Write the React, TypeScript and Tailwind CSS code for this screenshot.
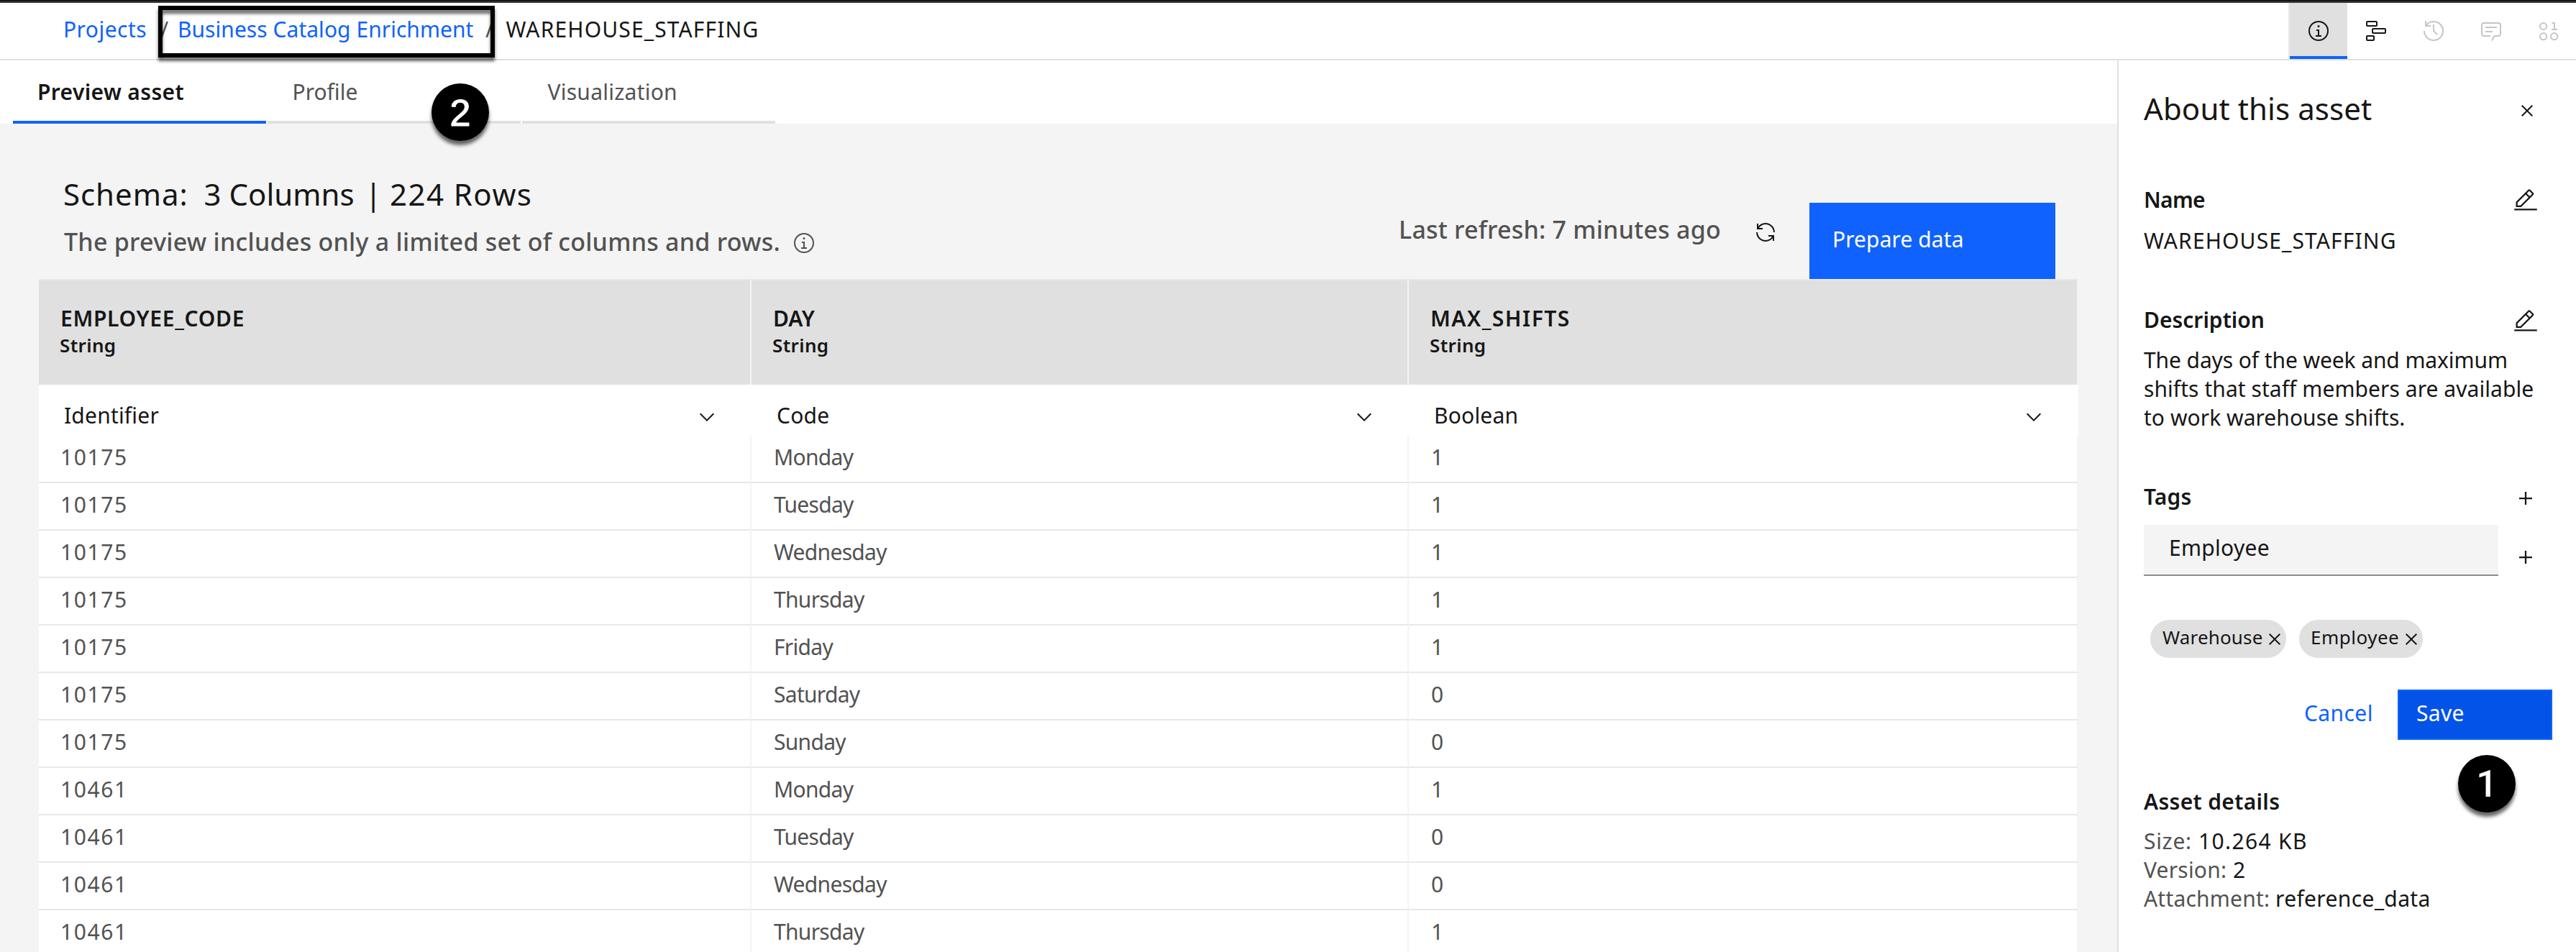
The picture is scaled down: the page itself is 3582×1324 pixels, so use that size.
import type { ReactNode } from "react";

type IconProps = { className?: string; children?: ReactNode };

const Svg = ({ className = "size-8", children }: IconProps) => (
  <svg viewBox="0 0 32 32" fill="currentColor" className={`shrink-0 ${className}`}>
    {children}
  </svg>
);

const InfoIcon = ({ className }: IconProps) => (
  <Svg className={className}>
    <path d="M17 22v-8h-4v2h2v6h-3v2h8v-2zM16 8a1.5 1.5 0 1 0 1.5 1.5A1.5 1.5 0 0 0 16 8z" />
    <path d="M16 30a14 14 0 1 1 14-14 14 14 0 0 1-14 14zm0-26a12 12 0 1 0 12 12A12 12 0 0 0 16 4z" />
  </Svg>
);

const LineageIcon = () => (
  <Svg>
    <g fill="none" stroke="currentColor" strokeWidth="2">
      <rect x="3" y="3" width="14" height="6" rx="1" />
      <rect x="11" y="13" width="18" height="6" rx="1" />
      <rect x="3" y="23" width="10" height="6" rx="1" />
    </g>
  </Svg>
);

const HistoryIcon = () => (
  <Svg>
    <path d="M20.59 22L15 16.41V7h2v8.58l5 5.01L20.59 22z" />
    <path d="M16 2A13.94 13.94 0 0 0 6 6.23V2H4v8h8V8H7.08A12 12 0 1 1 4 16H2A14 14 0 1 0 16 2z" />
  </Svg>
);

const CommentIcon = () => (
  <Svg>
    <path d="M17.74 30L16 29l4-7h6a2 2 0 0 0 2-2V8a2 2 0 0 0-2-2H6a2 2 0 0 0-2 2v12a2 2 0 0 0 2 2h9v2H6a4 4 0 0 1-4-4V8a4 4 0 0 1 4-4h20a4 4 0 0 1 4 4v12a4 4 0 0 1-4 4h-4.84z" />
    <path d="M8 10h16v2H8zM8 16h10v2H8z" />
  </Svg>
);

const BinaryIcon = () => (
  <Svg>
    <g fill="none" stroke="currentColor" strokeWidth="2">
      <circle cx="8.6" cy="9.6" r="4.6" />
      <circle cx="8.6" cy="23.7" r="4.6" />
      <circle cx="23.7" cy="23.7" r="4.6" />
      <path d="M20.5 5H24v9M20 14h8.3" />
    </g>
  </Svg>
);

const CloseIcon = ({ className }: IconProps) => (
  <Svg className={className}>
    <path d="M24 9.4L22.6 8 16 14.6 9.4 8 8 9.4l6.6 6.6L8 22.6 9.4 24l6.6-6.6 6.6 6.6 1.4-1.4-6.6-6.6z" />
  </Svg>
);

const EditIcon = () => (
  <Svg className="size-9">
    <path d="M2 26h28v2H2zM25.4 9c.8-.8.8-2 0-2.8l-3.6-3.6c-.8-.8-2-.8-2.8 0l-15 15V24h6.4zm-5-5L24 7.6l-3 3L17.4 7zM6 22v-3.6l10-10 3.6 3.6-10 10z" />
  </Svg>
);

const AddIcon = () => (
  <Svg className="size-9">
    <path d="M17 15V8h-2v7H8v2h7v7h2v-7h7v-2z" />
  </Svg>
);

const ChevronIcon = () => (
  <Svg>
    <path d="M16 22L6 12l1.4-1.4 8.6 8.6 8.6-8.6L26 12z" />
  </Svg>
);

const RenewIcon = () => (
  <Svg>
    <path d="M12 10H6.78A11 11 0 0 1 27 16h2A13 13 0 0 0 6 7.68V4H4v8h8zM20 22h5.22A11 11 0 0 1 5 16H3a13 13 0 0 0 23 8.32V28h2v-8h-8z" />
  </Svg>
);

const Step = ({ n, className }: { n: number; className: string }) => (
  <div
    className={`absolute z-20 flex size-20 items-center justify-center rounded-full bg-black pt-0.5 text-[52px] leading-none text-white shadow-[0_6px_5px_rgba(0,0,0,0.6)] ${className}`}
  >
    {n}
  </div>
);

const tools = [
  { icon: <LineageIcon />, color: "text-[#161616]" },
  { icon: <HistoryIcon />, color: "text-[#c6c6c6]" },
  { icon: <CommentIcon />, color: "text-[#c6c6c6]" },
  { icon: <BinaryIcon />, color: "text-[#c6c6c6]" },
];

const columns = [
  { name: "EMPLOYEE_CODE", kind: "Identifier", tracking: "tracking-[0.68px]" },
  { name: "DAY", kind: "Code", tracking: "tracking-normal" },
  { name: "MAX_SHIFTS", kind: "Boolean", tracking: "tracking-[1.5px]" },
];

const rows = [
  ["10175", "Monday", "1"],
  ["10175", "Tuesday", "1"],
  ["10175", "Wednesday", "1"],
  ["10175", "Thursday", "1"],
  ["10175", "Friday", "1"],
  ["10175", "Saturday", "0"],
  ["10175", "Sunday", "0"],
  ["10461", "Monday", "1"],
  ["10461", "Tuesday", "0"],
  ["10461", "Wednesday", "0"],
  ["10461", "Thursday", "1"],
];

const Header = () => (
  <header className="relative flex h-[84px] shrink-0 justify-between border-b-2 border-[#e0e0e0] bg-white">
    <div className="absolute inset-x-0 top-0 h-1 border-b-2 border-[#393939] bg-[#161616]" />
    <nav className="flex items-center pb-px pl-[88px] text-[#161616]">
      <span className="w-[135px] tracking-[0.46px] text-[#0f62fe]">Projects</span>
      <span className="w-6 text-[#525252]">/</span>
      <span className="w-[428px] tracking-[0.04px] text-[#0f62fe]">Business Catalog Enrichment</span>
      <span className="w-[28.5px] text-[#525252]">/</span>
      <span className="tracking-[1.14px]">WAREHOUSE_STAFFING</span>
    </nav>
    <div className="-mr-0.5 flex pt-1">
      <div className="flex w-[82px] items-center justify-center border-l-2 border-[#e8e8e8] bg-[#e0e0e0] text-[#161616] shadow-[inset_0_-4px_0_#0f62fe]">
        <InfoIcon />
      </div>
      {tools.map((t, i) => (
        <div key={i} className={`flex w-20 items-center justify-center ${t.color}`}>
          {t.icon}
        </div>
      ))}
    </div>
  </header>
);

const Tabs = () => (
  <div className="flex h-[88px] shrink-0 gap-0.5 bg-white pl-[18px] leading-[88px]">
    <div className="w-[352px] border-b-4 border-[#0f62fe] pl-[34px] font-semibold tracking-[0.37px] text-[#161616]">
      Preview asset
    </div>
    <div className="w-[352px] border-b-4 border-[#e0e0e0] pl-[34.5px] text-[#525252]">Profile</div>
    <div className="w-[352px] border-b-4 border-[#e0e0e0] pl-[35.5px] tracking-[0.25px] text-[#525252]">
      Visualization
    </div>
  </div>
);

const SchemaBar = () => (
  <div className="flex h-[216px] shrink-0 justify-between pr-[86px] pl-[88px]">
    <div className="pt-[70px]">
      <div className="flex text-[42px] leading-[56px] text-[#161616]">
        <span className="w-[195.5px] tracking-[0.95px]">Schema:</span>
        <span className="w-[224px]">3 Columns</span>
        <span className="w-[34.5px]">|</span>
        <span className="tracking-[1.45px]">224 Rows</span>
      </div>
      <div className="mt-[18px] flex items-center pl-px text-[34px] leading-10 font-medium tracking-[0.25px] text-[#525252]">
        The preview includes only a limited set of columns and rows.
        <InfoIcon className="mt-1 ml-[17px] size-8" />
      </div>
    </div>
    <div className="flex pt-[110px]">
      <span className="w-[494px] pt-[17px] text-[34px] leading-10 font-medium tracking-[0.22px] text-[#525252]">
        Last refresh: 7 minutes ago
      </span>
      <span className="w-[77px] pt-[25px] text-[#161616]">
        <RenewIcon />
      </span>
      <button className="flex h-[106px] w-[342px] bg-[#0f62fe] pt-[31px] pl-8 text-left leading-10 tracking-[0.08px] text-white">
        Prepare data
      </button>
    </div>
  </div>
);

const grid = "grid grid-cols-[991px_914px_931px]";

const Table = () => (
  <div className="ml-[54px] w-[2836px] border-t-2 border-[#e8e8e8]">
    <div className={`h-[145px] ${grid}`}>
      {columns.map((c) => (
        <div
          key={c.name}
          className="border-r-2 border-[#f4f4f4] bg-[#e0e0e0] pt-[33px] pl-[30px] font-semibold text-[#161616]"
        >
          <div className={`leading-10 ${c.tracking}`}>{c.name}</div>
          <div className="-mt-px -ml-px text-[26px] leading-9 tracking-[0.35px]">String</div>
        </div>
      ))}
    </div>
    <div className={`h-[71px] bg-white ${grid}`}>
      {columns.map((c) => (
        <div key={c.name} className="flex pt-[23px] pr-[46px] pl-[35px] text-[#161616]">
          <span className="grow leading-10 tracking-[0.2px]">{c.kind}</span>
          <span className="pt-1.5">
            <ChevronIcon />
          </span>
        </div>
      ))}
    </div>
    {rows.map((r, i) => (
      <div key={i} className={`h-[66px] ${grid}`}>
        {r.map((v, j) => (
          <div
            key={j}
            className={`border-r-2 border-b-2 border-r-[#f4f4f4] border-b-[#e8e8e8] bg-white pt-2.5 leading-10 text-[#525252] ${
              j === 0 ? "pl-[30px] tracking-[1.6px]" : "pl-[31px] tracking-[-0.7px]"
            }`}
          >
            {v}
          </div>
        ))}
      </div>
    ))}
  </div>
);

const Pill = ({ label, className }: { label: string; className: string }) => (
  <span className={`flex h-[53px] items-center rounded-full bg-[#e0e0e0] text-[26px] text-[#161616] ${className}`}>
    <span className="-mt-[5px] grow">{label}</span>
    <CloseIcon className="mt-px size-8" />
  </span>
);

const AboutPanel = () => (
  <aside className="flex w-[638px] shrink-0 flex-col border-l-2 border-[#e0e0e0] bg-white pl-[35px] leading-10 text-[#161616]">
    <div className="flex h-[138px] items-start justify-between pt-[39px] pr-[52px]">
      <h1 className="text-[42px] leading-[56px] tracking-[0.1px]">About this asset</h1>
      <CloseIcon className="mt-[15px] size-8" />
    </div>

    <section className="h-[167px] pt-9">
      <div className="flex items-start justify-between pr-[52px]">
        <h2 className="font-semibold tracking-[-0.7px]">Name</h2>
        <span className="mt-[3px]">
          <EditIcon />
        </span>
      </div>
      <p className="mt-[17px] tracking-[1.12px]">WAREHOUSE_STAFFING</p>
    </section>

    <section className="h-[246px] pt-9">
      <div className="flex items-start justify-between pr-[52px]">
        <h2 className="font-semibold">Description</h2>
        <span className="mt-1">
          <EditIcon />
        </span>
      </div>
      <p className="mt-4 w-[560px]">
        <span className="block tracking-[-0.1px]">The days of the week and maximum</span>
        <span className="block tracking-[0.06px]">shifts that staff members are available</span>
        <span className="block tracking-[0.04px]">to work warehouse shifts.</span>
      </p>
    </section>

    <section className="pt-[35px]">
      <div className="flex items-start justify-between pr-[52px]">
        <h2 className="pt-px font-semibold tracking-[0.2px]">Tags</h2>
        <span className="mt-[5px]">
          <AddIcon />
        </span>
      </div>
      <div className="mt-[19px] flex justify-between pr-[52px]">
        <div className="h-[71px] w-[493px] border-b-2 border-[#8d8d8d] bg-[#f4f4f4] pt-3 pl-[35px] tracking-[0.3px]">
          Employee
        </div>
        <span className="mt-[27px]">
          <AddIcon />
        </span>
      </div>
      <div className="mt-[61px] ml-[9px] flex gap-[18px]">
        <Pill label="Warehouse" className="w-[189px] pl-[17px] tracking-[0.15px]" />
        <Pill label="Employee" className="w-[172px] pl-4 tracking-[0.5px]" />
      </div>
      <div className="mt-[44px] flex justify-end pr-[33px]">
        <button className="h-[70px] w-[130px] pb-1 text-left tracking-[0.4px] text-[#0f62fe]">Cancel</button>
        <button className="h-[70px] w-[215px] border-2 border-[#0f62fe] bg-[#0353e9] pb-1 pl-6 text-left tracking-[0.3px] text-white">
          Save
        </button>
      </div>
    </section>

    <section className="pt-[66px]">
      <h2 className="font-semibold tracking-[0.32px]">Asset details</h2>
      <dl className="mt-[15px]">
        <div className="flex">
          <dt className="w-[76px] tracking-[0.7px] text-[#525252]">Size:</dt>
          <dd className="tracking-[1.35px]">10.264 KB</dd>
        </div>
        <div className="flex">
          <dt className="w-[124px] tracking-[0.2px] text-[#525252]">Version:</dt>
          <dd>2</dd>
        </div>
        <div className="flex">
          <dt className="w-[183px] tracking-[0.2px] text-[#525252]">Attachment:</dt>
          <dd className="tracking-[0.35px]">reference_data</dd>
        </div>
      </dl>
    </section>
  </aside>
);

export default function App() {
  return (
    <div className="relative flex h-[1324px] w-[3582px] flex-col overflow-hidden bg-white font-['Noto_Sans',sans-serif] text-[30px]">
      <Header />
      <div className="flex min-h-0 grow">
        <main className="flex grow flex-col overflow-hidden bg-[#f4f4f4]">
          <Tabs />
          <SchemaBar />
          <Table />
        </main>
        <AboutPanel />
      </div>
      <div className="absolute top-2 left-[220px] z-10 h-[72px] w-[468px] border-6 border-black [filter:drop-shadow(0_5px_2px_rgba(0,0,0,0.6))]" />
      <Step
        n={2}
        className="top-[116px] left-[600px] font-['Liberation_Sans',sans-serif] [-webkit-text-stroke:1.2px_white]"
      />
      <Step n={1} className="top-[1050px] left-[3418px] font-['Roboto',sans-serif] font-medium" />
    </div>
  );
}
